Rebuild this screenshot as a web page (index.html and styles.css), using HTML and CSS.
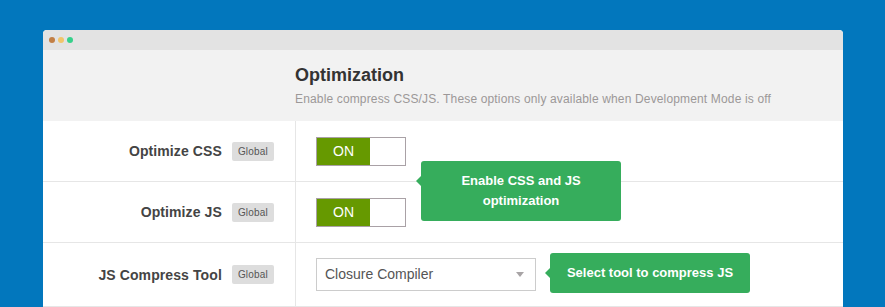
FILE: index.html
```html
<!DOCTYPE html>
<html lang="en">
  <head>
    <meta charset="UTF-8">
    <title>Optimization</title>
    <link rel="stylesheet" href="styles.css">
  </head>
  <body>
    <div class="window">
      <div class="titlebar">
        <span class="dot red"></span>
        <span class="dot yellow"></span>
        <span class="dot green"></span>
      </div>
      <div class="panel-head">
        <h2>Optimization</h2>
        <p>Enable compress CSS/JS. These options only available when Development Mode is off</p>
      </div>

      <div class="row">
        <div class="label">Optimize CSS <span class="badge">Global</span></div>
        <div class="control">
          <div class="toggle"><span class="on">ON</span><span class="off"></span></div>
        </div>
      </div>
      <div class="row">
        <div class="label">Optimize JS <span class="badge">Global</span></div>
        <div class="control">
          <div class="toggle"><span class="on">ON</span><span class="off"></span></div>
        </div>
      </div>
      <div class="row tall">
        <div class="label">JS Compress Tool <span class="badge">Global</span></div>
        <div class="control">
          <div class="select">Closure Compiler <span class="caret"></span></div>
          <div class="tip">Select tool to compress JS</div>
        </div>
      </div>

      <!-- floating hint shared by the two toggles -->
      <div class="tip tip-float">Enable CSS and JS<br>optimization</div>
    </div>
  </body>
</html>
```

FILE: styles.css
```css
html, body {
  margin: 0;
  padding: 0;
  height: 100%;
  overflow: hidden;
}

body {
  background: #0277bd;
  font-family: "Liberation Sans", Arial, sans-serif;
  padding: 30px 0 0 43px;
  box-sizing: border-box;
}

.window {
  position: relative;
  width: 800px;
  background: #fff;
  border-radius: 4px 4px 0 0;
  overflow: hidden;
}

.titlebar {
  height: 20px;
  background: #e3e3e3;
  display: flex;
  align-items: center;
  gap: 3px;
  padding-left: 6px;
}

.dot {
  width: 6px;
  height: 6px;
  border-radius: 50%;
}
.dot.red { background: #c27f45; }
.dot.yellow { background: #f1c56a; }
.dot.green { background: #36d08a; }

.panel-head {
  background: #f2f2f2;
  height: 71px;
  box-sizing: border-box;
  padding: 14px 0 0 252px;
}

.panel-head h2 {
  margin: 0;
  font-size: 18px;
  line-height: 22px;
  color: #333;
}

.panel-head p {
  margin: 5px 0 0;
  font-size: 12px;
  line-height: 16px;
  letter-spacing: 0.15px;
  color: #9c9898;
}

.row {
  display: grid;
  grid-template-columns: 253px 1fr;
  height: 60px;
  border-bottom: 1px solid #e6e6e6;
}
.row.tall { height: 63px; }

.label {
  border-right: 1px solid #e6e6e6;
  display: flex;
  justify-content: flex-end;
  align-items: center;
  gap: 10px;
  padding-right: 21px;
  font-size: 14px;
  font-weight: bold;
  letter-spacing: 0.1px;
  color: #444;
}

.badge {
  background: #ddd;
  color: #555;
  font-size: 10px;
  font-weight: normal;
  letter-spacing: 0.2px;
  line-height: 19px;
  padding: 0 6px;
  border-radius: 2px;
}

.control {
  display: flex;
  align-items: center;
  padding-left: 20px;
}

.toggle {
  display: flex;
  width: 88px;
  height: 27px;
  border: 1px solid #a9a1a6;
  background: #fff;
}
.toggle .on {
  width: 53px;
  background: #669900;
  color: #fff;
  font-size: 14px;
  line-height: 27px;
  text-align: center;
}

.select {
  position: relative;
  width: 210px;
  height: 31px;
  border: 1px solid #ccc;
  font-size: 14px;
  line-height: 31px;
  color: #555;
  padding-left: 8px;
}
.caret {
  position: absolute;
  right: 11px;
  top: 13px;
  border-left: 4px solid transparent;
  border-right: 4px solid transparent;
  border-top: 5px solid #a8a4a6;
}

.tip {
  position: relative;
  background: #36ad5c;
  color: #fff;
  font-size: 13px;
  font-weight: bold;
  border-radius: 3px;
  text-align: center;
  width: 200px;
  line-height: 20px;
  padding: 10px 0;
  box-sizing: border-box;
  margin-left: 14px;
  margin-top: -3px;
}
.tip::before {
  content: "";
  position: absolute;
  left: -5px;
  top: 15px;
  border-top: 5px solid transparent;
  border-bottom: 5px solid transparent;
  border-right: 5px solid #36ad5c;
}

.tip-float {
  position: absolute;
  left: 378px;
  top: 131px;
  margin: 0;
}
```
